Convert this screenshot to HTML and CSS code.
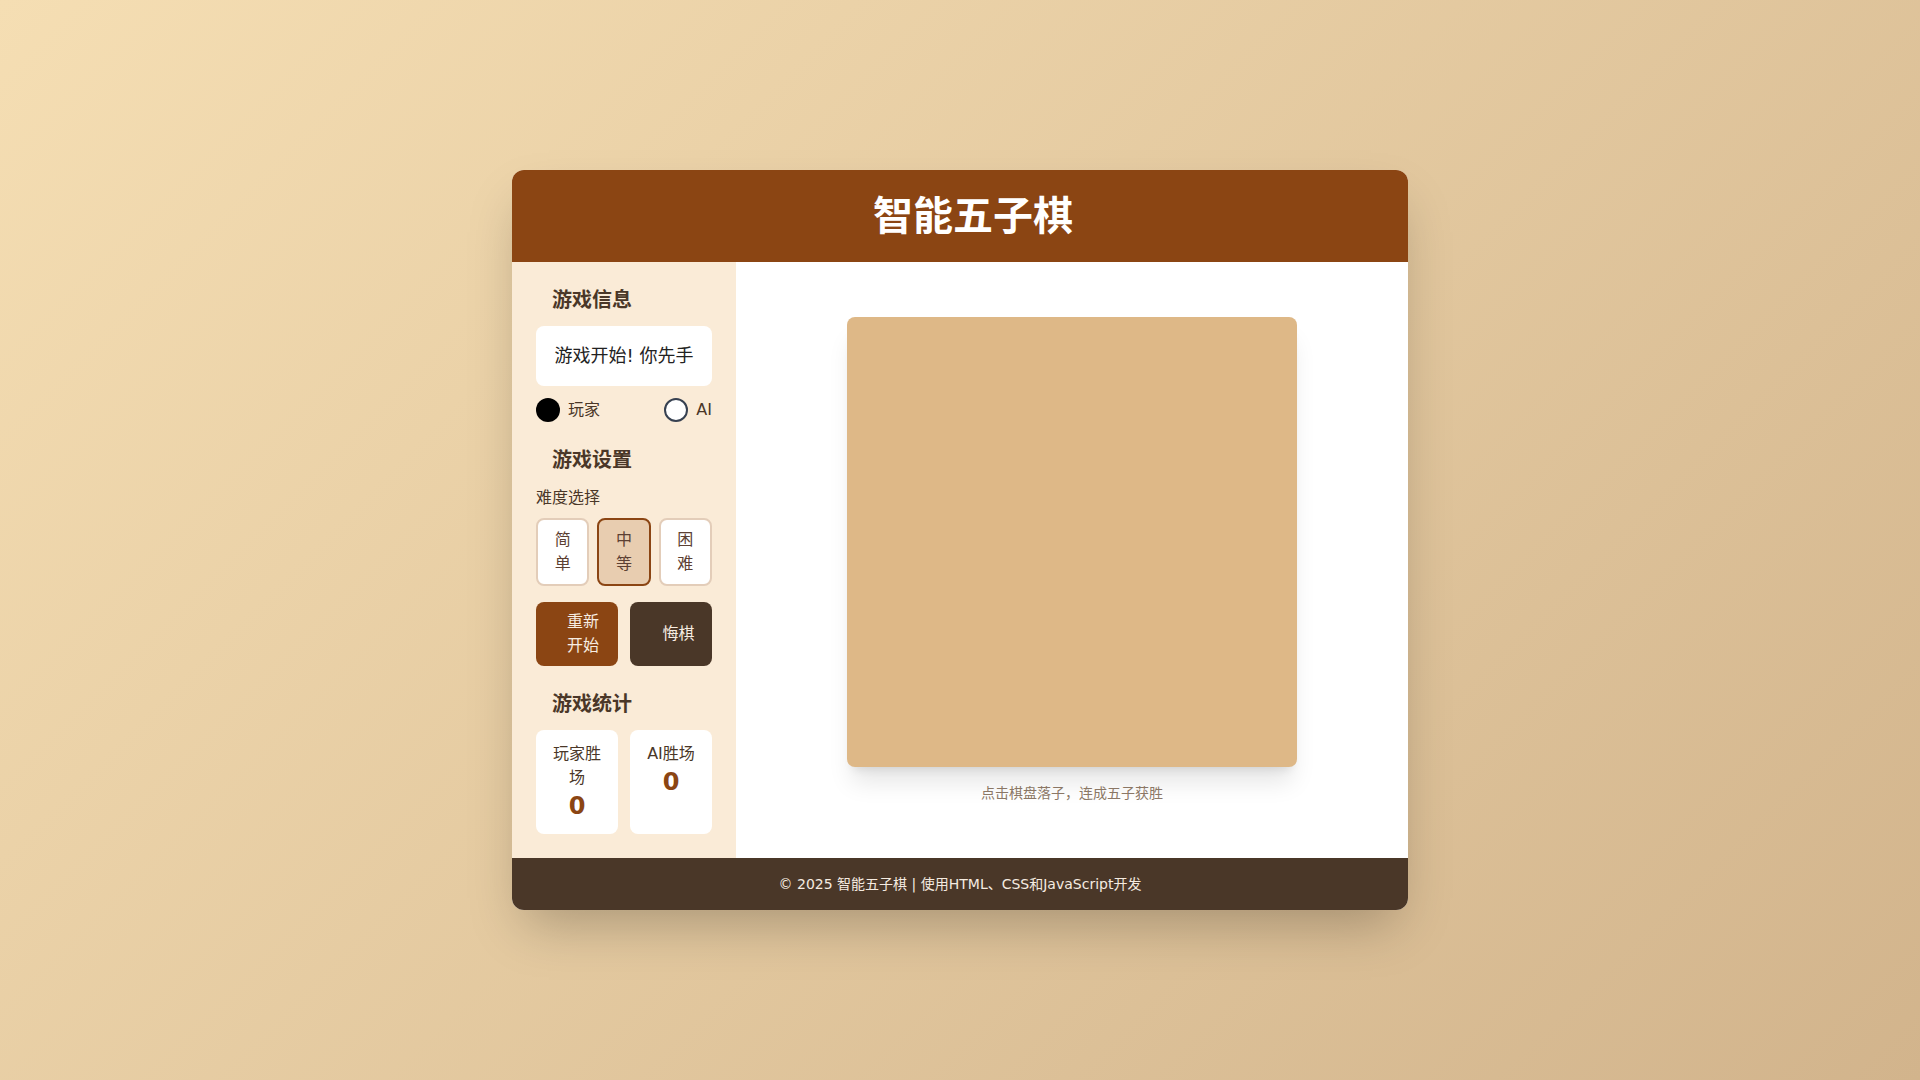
FILE: index.html
```html
<!DOCTYPE html>
<html lang="zh-CN">
<head>
<meta charset="UTF-8">
<title>智能五子棋</title>
<link rel="stylesheet" href="styles.css">
</head>
<body>
<div class="card">
  <header class="header">
    <h1 class="title"><span class="icon-title"></span>智能五子棋</h1>
  </header>
  <div class="body">
    <aside class="sidebar">
      <section class="section">
        <h2 class="heading"><span class="icon-head"></span>游戏信息</h2>
        <div class="status">游戏开始! 你先手</div>
        <div class="players">
          <div class="player"><span class="stone black"></span><span>玩家</span></div>
          <div class="player"><span class="stone white"></span><span>AI</span></div>
        </div>
      </section>
      <section class="section">
        <h2 class="heading"><span class="icon-head"></span>游戏设置</h2>
        <div class="label">难度选择</div>
        <div class="diffs">
          <button class="diff">简单</button>
          <button class="diff active">中等</button>
          <button class="diff">困难</button>
        </div>
        <div class="actions">
          <button class="action restart"><span class="icon-btn"></span><span class="action-text">重新开始</span></button>
          <button class="action undo"><span class="icon-btn"></span><span class="action-text">悔棋</span></button>
        </div>
      </section>
      <section class="section last">
        <h2 class="heading"><span class="icon-head"></span>游戏统计</h2>
        <div class="stats">
          <div class="stat"><div class="stat-label">玩家胜场</div><div class="stat-num">0</div></div>
          <div class="stat"><div class="stat-label">AI胜场</div><div class="stat-num">0</div></div>
        </div>
      </section>
    </aside>
    <main class="main">
      <div class="board"></div>
      <p class="hint">点击棋盘落子，连成五子获胜</p>
    </main>
  </div>
  <footer class="footer">© 2025 智能五子棋 | 使用HTML、CSS和JavaScript开发</footer>
</div>
</body>
</html>
```

FILE: styles.css
```css
* { box-sizing: border-box; }
html, body { margin: 0; padding: 0; }
body {
  min-height: 100vh;
  display: flex;
  align-items: center;
  justify-content: center;
  background: linear-gradient(135deg, #f5deb3 0%, #d2b48c 100%);
  font-family: "DejaVu Sans", "Noto Sans CJK SC", sans-serif;
  color: #4a3728;
}
.card {
  width: 896px;
  border-radius: 12px;
  overflow: hidden;
  background: #fff;
  box-shadow: 0 25px 50px -12px rgba(0,0,0,0.25);
}
.header {
  background: #8b4513;
  padding: 24px;
  text-align: center;
}
.title {
  margin: 0;
  color: #fff;
  font-size: 40px;
  line-height: 44px;
  font-weight: 700;
}
.icon-title { display: inline-block; width: 26px; }
.body { display: flex; }
.sidebar {
  width: 224px;
  background: #faebd7;
  padding: 24px;
}
.section { margin-bottom: 24px; }
.section.last { margin-bottom: 0; }
.heading {
  margin: 0 0 12px;
  font-size: 20px;
  line-height: 28px;
  font-weight: 700;
  color: #4a3728;
}
.icon-head { display: inline-block; width: 16px; }
.status {
  background: #fff;
  border-radius: 8px;
  padding: 16px;
  text-align: center;
  font-size: 18px;
  line-height: 28px;
  color: #222;
}
.players {
  margin-top: 12px;
  display: flex;
  justify-content: space-between;
  align-items: center;
}
.player {
  display: flex;
  align-items: center;
  gap: 8px;
  font-size: 16px;
  line-height: 24px;
  color: #4a3728;
}
.stone {
  width: 24px;
  height: 24px;
  border-radius: 50%;
  display: inline-block;
}
.stone.black { background: #000; }
.stone.white { background: #fff; border: 2px solid #374151; }
.label {
  font-size: 16px;
  line-height: 24px;
  margin-bottom: 8px;
  color: #4a3728;
}
.diffs {
  display: grid;
  grid-template-columns: repeat(3, 1fr);
  gap: 8px;
  margin-bottom: 16px;
}
.diff {
  font-family: inherit;
  font-size: 16px;
  line-height: 24px;
  padding: 8px 16px;
  background: #fff;
  border: 2px solid #e3cdb9;
  border-radius: 8px;
  color: #5c4033;
  cursor: pointer;
}
.diff.active {
  background: #e8cdb0;
  border-color: #8b4513;
}
.actions {
  display: grid;
  grid-template-columns: 1fr 1fr;
  gap: 12px;
}
.action {
  font-family: inherit;
  font-size: 16px;
  line-height: 24px;
  padding: 8px 16px;
  border: none;
  border-radius: 8px;
  color: #f7ede2;
  display: flex;
  align-items: center;
  justify-content: center;
  cursor: pointer;
}
.icon-btn { display: inline-block; width: 7px; margin-right: 8px; flex: none; }
.action-text { text-align: left; }
.restart { background: #8b4513; }
.undo { background: #4a3728; }
.stats {
  display: grid;
  grid-template-columns: 1fr 1fr;
  gap: 12px;
}
.stat {
  background: #fff;
  border-radius: 8px;
  padding: 12px;
  height: 104px;
  text-align: center;
}
.stat-label {
  font-size: 16px;
  line-height: 24px;
  color: #4a3728;
}
.stat-num {
  font-size: 24px;
  line-height: 32px;
  font-weight: 700;
  color: #8b4513;
}
.main {
  flex: 1;
  padding: 24px;
  display: flex;
  flex-direction: column;
  align-items: center;
  justify-content: center;
  background: #fff;
}
.board {
  width: 450px;
  height: 450px;
  background: #deb887;
  border-radius: 8px;
  box-shadow: 0 20px 25px -5px rgba(0,0,0,0.1), 0 8px 10px -6px rgba(0,0,0,0.1);
}
.hint {
  margin: 16px 0 0;
  font-size: 14px;
  line-height: 20px;
  color: #8b7765;
}
.footer {
  background: #4a3728;
  color: #f5ebe0;
  text-align: center;
  font-size: 14px;
  line-height: 20px;
  padding: 16px;
}
```
